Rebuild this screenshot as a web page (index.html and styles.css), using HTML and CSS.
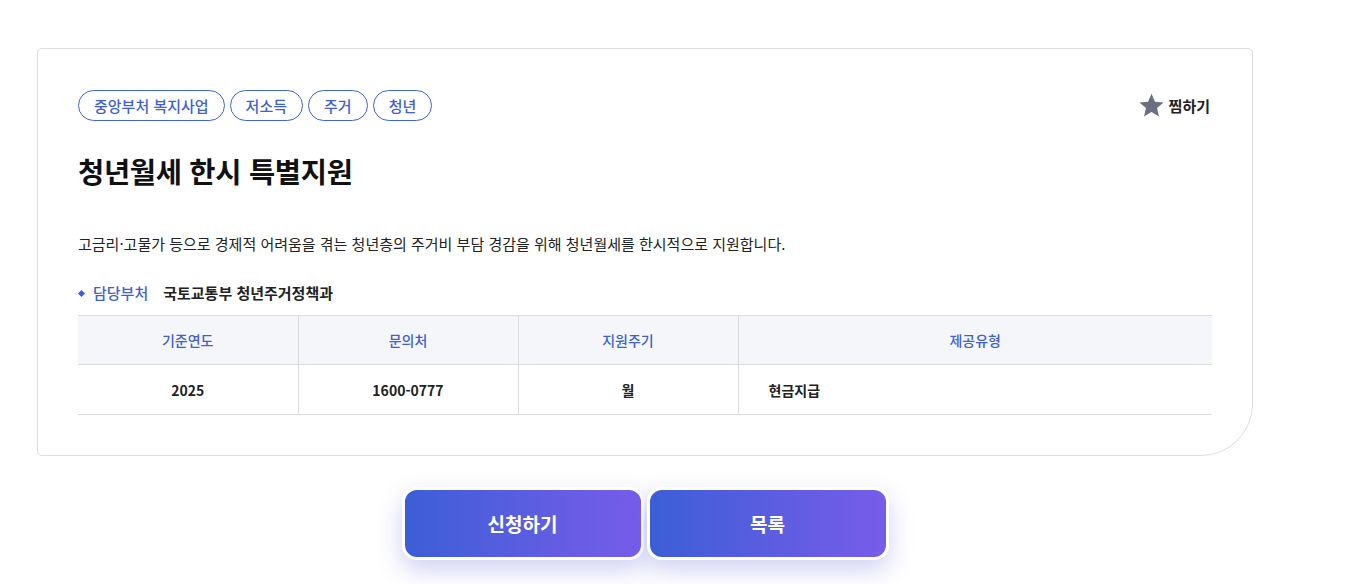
FILE: index.html
```html
<!DOCTYPE html>
<html lang="ko">
<head>
<meta charset="utf-8">
<link rel="stylesheet" href="styles.css">
</head>
<body>
<div class="page">
  <section class="card">
    <div class="top-row">
      <ul class="tags">
        <li class="tag">중앙부처 복지사업</li>
        <li class="tag">저소득</li>
        <li class="tag">주거</li>
        <li class="tag">청년</li>
      </ul>
      <button class="fav">
        <svg class="star" width="25" height="25" viewBox="0 0 24 24"><path d="M12 0.6l3.3 7.7 8.3 0.7-6.3 5.4 1.9 8.2L12 18.3l-7.2 4.3 1.9-8.2L0.4 9l8.3-0.7z" fill="#6c6f82"/></svg>
        <span>찜하기</span>
      </button>
    </div>
    <h1 class="title">청년월세 한시 특별지원</h1>
    <p class="desc">고금리·고물가 등으로 경제적 어려움을 겪는 청년층의 주거비 부담 경감을 위해 청년월세를 한시적으로 지원합니다.</p>
    <div class="dept">
      <span class="dept-label">담당부처</span>
      <span class="dept-value">국토교통부 청년주거정책과</span>
    </div>
    <table class="info">
      <thead>
        <tr>
          <th class="c1">기준연도</th>
          <th class="c2">문의처</th>
          <th class="c3">지원주기</th>
          <th class="c4">제공유형</th>
        </tr>
      </thead>
      <tbody>
        <tr>
          <td>2025</td>
          <td>1600-0777</td>
          <td>월</td>
          <td class="left">현금지급</td>
        </tr>
      </tbody>
    </table>
  </section>
  <div class="actions">
    <button class="btn">신청하기</button>
    <button class="btn">목록</button>
  </div>
</div>
</body>
</html>
```
FILE: styles.css
```css
* { box-sizing: border-box; }
html, body { margin: 0; padding: 0; background: #fff; }
body {
  font-family: "Noto Sans CJK KR", "Noto Sans", sans-serif;
  color: #222;
}
.page {
  width: 1216px;
  margin-left: 37px;
  padding-top: 48px;
  padding-bottom: 30px;
}
.card {
  border: 1px solid #dedede;
  border-radius: 5px 5px 52px 5px;
  padding: 40px 40px 40px 40px;
}
.top-row {
  display: flex;
  justify-content: space-between;
  align-items: center;
  height: 33px;
}
.tags {
  display: flex;
  gap: 5px;
  margin: 0;
  padding: 0;
  list-style: none;
}
.tag {
  height: 31px;
  padding: 0 15px;
  border: 1px solid #3f63d8;
  border-radius: 16px;
  color: #3f5fd4;
  font-size: 15px;
  font-weight: 500;
  line-height: 29px;
}
.fav {
  display: flex;
  align-items: center;
  gap: 5px;
  border: 0;
  background: none;
  padding: 0;
  margin-right: 2px;
  font-family: inherit;
  font-size: 15px;
  font-weight: 700;
  color: #222;
}
.title {
  margin: 29px 0 0;
  font-size: 28.5px;
  font-weight: 700;
  line-height: 40px;
  color: #111;
  letter-spacing: -0.3px;
}
.desc {
  margin: 41px 0 0;
  font-size: 15px;
  line-height: 24px;
  color: #222;
}
.dept {
  margin-top: 25px;
  display: flex;
  align-items: center;
  font-size: 15px;
  line-height: 24px;
}
.dept-label {
  position: relative;
  padding-left: 15px;
  color: #3f5fd4;
  font-weight: 500;
}
.dept-label::before {
  content: "";
  position: absolute;
  left: 1px;
  top: 10px;
  width: 5px;
  height: 5px;
  background: #3f5fd4;
  transform: rotate(45deg);
}
.dept-value {
  margin-left: 15px;
  font-weight: 700;
  color: #222;
}
.info {
  margin-top: 10px;
  width: 100%;
  border-collapse: collapse;
  font-size: 14px;
}
.info th, .info td {
  border-top: 1px solid #dcdcdc;
  border-bottom: 1px solid #dcdcdc;
  border-left: 1px solid #dcdcdc;
  text-align: center;
}
.info th:first-child, .info td:first-child { border-left: 0; }
.info th {
  height: 49px;
  background: #f5f6fa;
  color: #3f5fd4;
  font-weight: 500;
}
.info td {
  height: 50px;
  font-weight: 700;
  color: #222;
}
.info td.left { text-align: left; padding-left: 30px; }
.c1, .c2, .c3 { width: 220px; }
.actions {
  display: flex;
  justify-content: center;
  gap: 3px;
  margin-top: 31px;
}
.btn {
  width: 242px;
  height: 73px;
  border: 3px solid #fff;
  border-radius: 15px;
  background: linear-gradient(90deg, #3c5ed6 0%, #785ce9 100%);
  color: #fff;
  font-family: inherit;
  font-size: 19px;
  font-weight: 700;
  box-shadow: 0 10px 24px rgba(100, 100, 215, 0.3);
  cursor: pointer;
}
```
